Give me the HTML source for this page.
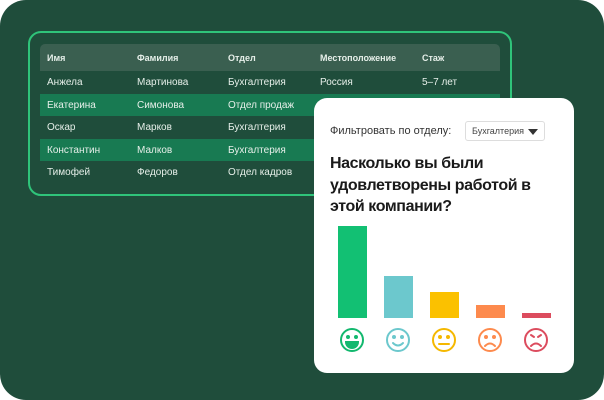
<!DOCTYPE html>
<html><head><meta charset="utf-8"><style>
*{margin:0;padding:0;box-sizing:border-box}
body{width:604px;height:400px;background:#fff;overflow:hidden;font-family:"Liberation Sans","DejaVu Sans",sans-serif}
.bg{position:absolute;left:0;top:0;width:604px;height:400px;background:#1f4d3b;border-radius:26px}
.frame{position:absolute;left:28px;top:31px;width:484px;height:165px;border:2px solid #2fc47a;border-radius:13px}
.tbl{position:absolute;left:40px;top:44px;width:460px}
.row{position:relative;height:22.6px;color:#e6efe9;font-size:10px}
.row span{position:absolute;top:6px}
.hd{height:27px;background:#3a5f50;border-radius:5px 5px 0 0;font-weight:bold;font-size:9px}
.hd span{top:9px}
.g{background:#187a52}
.c1{left:7px}.c2{left:97px}.c3{left:188px}.c4{left:280px}.c5{left:382px}
.card{position:absolute;left:314px;top:98px;width:260px;height:275px;background:#fff;border-radius:13px}
.lbl{position:absolute;left:16px;top:27px;font-size:11px;color:#333}
.dd{position:absolute;left:151px;top:23px;width:80px;height:20px;border:1px solid #ddd;border-radius:3px;font-size:9px;color:#444;padding:4px 0 0 6px}
.dd i{position:absolute;right:6px;top:7px;width:0;height:0;border-left:5px solid transparent;border-right:5px solid transparent;border-top:6px solid #333}
.q{position:absolute;left:16px;top:55px;font-size:16px;font-weight:bold;line-height:21.5px;color:#1a1a1a;width:240px;letter-spacing:-0.4px;white-space:nowrap}
.bar{position:absolute;width:29px}
</style></head><body>
<div class="bg"></div>
<div class="frame"></div>
<div class="tbl">
<div class="row hd"><span class="c1">Имя</span><span class="c2">Фамилия</span><span class="c3">Отдел</span><span class="c4">Местоположение</span><span class="c5">Стаж</span></div>
<div class="row"><span class="c1">Анжела</span><span class="c2">Мартинова</span><span class="c3">Бухгалтерия</span><span class="c4">Россия</span><span class="c5">5–7 лет</span></div>
<div class="row g"><span class="c1">Екатерина</span><span class="c2">Симонова</span><span class="c3">Отдел продаж</span></div>
<div class="row"><span class="c1">Оскар</span><span class="c2">Марков</span><span class="c3">Бухгалтерия</span></div>
<div class="row g"><span class="c1">Константин</span><span class="c2">Малков</span><span class="c3">Бухгалтерия</span></div>
<div class="row"><span class="c1">Тимофей</span><span class="c2">Федоров</span><span class="c3">Отдел кадров</span></div>
</div>
<div class="card">
<div class="lbl">Фильтровать по отделу:</div>
<div class="dd">Бухгалтерия<i></i></div>
<div class="q">Насколько вы были<br>удовлетворены работой в<br>этой компании?</div>
<div class="bar" style="left:24px;top:128px;height:92px;background:#12c073"></div>
<div class="bar" style="left:70px;top:178px;height:42px;background:#6cc8cd"></div>
<div class="bar" style="left:116px;top:194px;height:26px;background:#fbc100"></div>
<div class="bar" style="left:162px;top:207px;height:13px;background:#fd8a4d"></div>
<div class="bar" style="left:208px;top:215px;height:5px;background:#dc4c5e"></div>
<svg style="position:absolute;left:0;top:0" width="260" height="275" fill="none" stroke-width="2" stroke-linecap="round">
<g stroke="#12b86e"><circle cx="38" cy="242" r="11"/><circle cx="34" cy="239" r="1" fill="#12b86e"/><circle cx="42" cy="239" r="1" fill="#12b86e"/><path d="M32 244h12a6 6 0 0 1-12 0z" fill="#12b86e"/></g>
<g stroke="#6cc8cd"><circle cx="84" cy="242" r="11"/><circle cx="80" cy="239" r="1" fill="#6cc8cd"/><circle cx="88" cy="239" r="1" fill="#6cc8cd"/><path d="M79 245q5 5 10 0"/></g>
<g stroke="#f5b800"><circle cx="130" cy="242" r="11"/><circle cx="126" cy="239" r="1" fill="#f5b800"/><circle cx="134" cy="239" r="1" fill="#f5b800"/><path d="M125 246h10"/></g>
<g stroke="#fd8a4d"><circle cx="176" cy="242" r="11"/><circle cx="172" cy="239" r="1" fill="#fd8a4d"/><circle cx="180" cy="239" r="1" fill="#fd8a4d"/><path d="M171 248q5-5 10 0"/></g>
<g stroke="#dc4c5e"><circle cx="222" cy="242" r="11"/><path d="M217 237l3 2M227 237l-3 2"/><path d="M217 248q5-5 10 0"/></g>
</svg>
</div>
</body></html>
